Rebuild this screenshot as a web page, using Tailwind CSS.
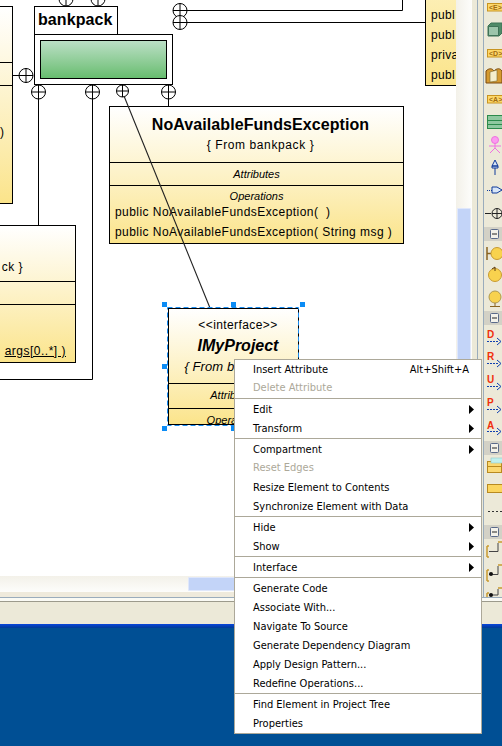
<!DOCTYPE html>
<html><head><meta charset="utf-8">
<script src="https://cdn.jsdelivr.net/npm/@tailwindcss/browser@4"></script>
</head>
<body class="m-0">
<div class="relative w-[502px] h-[746px] overflow-hidden flex flex-col bg-[#ece9d8] font-['Liberation_Sans',sans-serif] text-black">
  <!-- workspace -->
  <div class="flex h-[598px] shrink-0">
    <div class="w-[477px] shrink-0 flex flex-col">
      <div class="flex h-[576px] shrink-0">
        <div class="relative w-[456px] shrink-0 bg-white overflow-hidden">
          <!-- top-left class -->
          <div class="absolute left-[-60px] top-[6px] w-[73px] h-[198px] border border-black bg-linear-to-b from-white to-[#fbe48a] flex flex-col">
            <div class="h-[56px] border-b border-black"></div>
            <div class="h-[23px] border-b border-black"></div>
            <div class="pt-[40px] pl-[59px] text-[12px] leading-none">)</div>
          </div>
          <!-- lower-left class -->
          <div class="absolute left-[-60px] top-[225px] w-[136px] h-[138px] border border-black bg-linear-to-b from-white to-[#fbe48a] flex flex-col text-[12px]">
            <div class="h-[56px] border-b border-black relative"><span class="absolute right-[52px] top-[32px] tracking-[0.5px]">ck }</span></div>
            <div class="h-[23px] border-b border-black"></div>
            <div class="flex-1 relative"><span class="absolute right-[9px] bottom-[2px] underline tracking-[0.5px]">args[0..*] )</span></div>
          </div>
          <!-- top-right class -->
          <div class="absolute left-[425px] top-[-40px] w-[60px] h-[126px] border border-black bg-linear-to-b from-[#fdf3c4] to-[#fbe48a] text-[12px] pl-[5px] pt-[44px] flex flex-col">
            <span class="h-[20px] leading-[20px] tracking-[0.3px]">publ</span>
            <span class="h-[20px] leading-[20px] tracking-[0.3px]">publ</span>
            <span class="h-[20px] leading-[20px] tracking-[0.3px]">priva</span>
            <span class="h-[20px] leading-[20px] tracking-[0.3px]">publ</span>
          </div>
          <!-- bankpack -->
          <div class="absolute left-[34px] top-[6px] w-[84px] h-[29px] border border-black bg-white pl-[3px] text-[16px] leading-[25px] font-bold tracking-[0.1px]">bankpack</div>
          <div class="absolute left-[34px] top-[34px] w-[139px] h-[51px] border border-black bg-white p-[5px]">
            <div class="h-[39px] border border-black bg-linear-to-b from-[#bbdfc6] to-[#67bd6f]"></div>
          </div>
          <!-- NoAvailableFundsException -->
          <div class="absolute left-[109px] top-[106px] w-[295px] h-[138px] border border-black bg-linear-to-b from-white to-[#fbe48a] flex flex-col">
            <div class="h-[56px] border-b border-black flex flex-col items-center pt-[8px] pl-[8px]">
              <div class="text-[16px] leading-[20px] font-bold tracking-[0.08px]">NoAvailableFundsException</div>
              <div class="text-[12px] leading-[20px] tracking-[0.6px]">{ From bankpack }</div>
            </div>
            <div class="h-[23px] border-b border-black text-center text-[11px] italic leading-[22px]">Attributes</div>
            <div class="flex flex-col pt-[4px]">
              <div class="text-center text-[11px] italic leading-[12px]">Operations</div>
              <div class="pl-[5px] text-[12px] leading-[20px] tracking-[0.45px] whitespace-pre">public NoAvailableFundsException(  )</div>
              <div class="pl-[5px] text-[12px] leading-[20px] tracking-[0.45px] whitespace-pre">public NoAvailableFundsException( String msg )</div>
            </div>
          </div>
          <!-- IMyProject -->
          <div class="absolute left-[168px] top-[308px] w-[131px] h-[117px] border border-black bg-linear-to-b from-white to-[#fbe48a] flex flex-col overflow-hidden">
            <div class="h-[75px] shrink-0 border-b border-black flex flex-col items-center pt-[7px] pl-[9px]">
              <div class="text-[12px] leading-[18px] tracking-[0.4px]">&lt;&lt;interface&gt;&gt;</div>
              <div class="text-[16px] leading-[24px] font-bold italic">IMyProject</div>
              <div class="text-[13px] leading-[17px] italic whitespace-pre tracking-[0.1px]">{ From bankpack }</div>
            </div>
            <div class="h-[25px] shrink-0 border-b border-black text-center text-[11px] italic leading-[23px]">Attributes</div>
            <div class="text-center text-[11px] italic leading-[22px]">Operations</div>
          </div>
          <!-- connectors, drawn on top of the nodes -->
          <svg class="absolute left-0 top-0" width="456" height="576" fill="none" stroke="#000">
            <g stroke-width="1">
              <path d="M38.500 99V225M92.500 99V379.500H0M168.500 99V106M19 75.500H12M187 10.500H402.500V0M187 22.500H425"/>
              <g fill="#fff">
                <circle cx="66" cy="-1" r="7"/><circle cx="98" cy="-1" r="7"/>
                <circle cx="180" cy="10.500" r="7"/><circle cx="180" cy="22.500" r="7"/>
                <circle cx="26" cy="75.500" r="7"/><circle cx="38.500" cy="92" r="7"/>
                <circle cx="92.500" cy="92" r="7"/><circle cx="122.500" cy="91" r="6"/>
                <circle cx="168.500" cy="92" r="7"/>
              </g>
              <path d="M66 -8V6M59 -1H73M98 -8V6M91 -1H105M180 3V29M173 10.500H187M173 22.500H187M26 68V83M19 75.500H33M38.500 85V99M31.500 92H45.500M92.500 85V99M85.500 92H99.500M122.500 85V97M116.500 91H128.500M168.500 85V99M161.500 92H175.500"/>
            </g>
            <path d="M124 96L210 308" stroke="#222" stroke-width="1.100"/>
            <rect x="167.500" y="307.500" width="131" height="118" stroke="#1a8cf0" stroke-dasharray="5 3"/>
            <g fill="#0b8cf5" stroke="none">
              <rect x="162" y="302" width="5" height="5"/><rect x="231" y="302" width="5" height="5"/><rect x="300" y="302" width="5" height="5"/>
              <rect x="162" y="364" width="5" height="5"/><rect x="162" y="426" width="5" height="5"/><rect x="231" y="426" width="5" height="5"/>
            </g>
          </svg>
        </div>
        <!-- vertical scrollbar -->
        <div class="w-[16px] shrink-0 bg-linear-to-r from-[#f3f1e9] to-[#fdfdfb] pt-[208px] pl-px pr-px">
          <div class="h-[368px] bg-[#c3d4f8] border border-[#dfe7fb] rounded-[1px]"></div>
        </div>
        <div class="flex-1 bg-[#ece9d8]"></div>
      </div>
      <!-- horizontal scrollbar -->
      <div class="h-[16px] shrink-0 bg-linear-to-b from-[#f3f1e9] to-[#fdfdfb] pl-[188px] pt-px">
        <div class="w-[100px] h-[14px] bg-[#c3d4f8] border border-[#dfe7fb] rounded-[1px]"></div>
      </div>
      <div class="h-[6px] shrink-0 bg-[#efeadc] border-b border-[#9aacbc]"></div>
    </div>
    <!-- palette -->
    <div class="flex-1 flex min-w-0 border-l border-[#9aacbc]">
      <div class="w-[5px] shrink-0 border-b border-[#9aacbc]"></div>
      <div class="flex-1 min-w-0 border-l border-[#9aacbc] overflow-hidden">
        <svg width="18" height="598" class="block" font-family="Liberation Sans" font-weight="bold">
          <!-- tags -->
          <g><rect x="3.500" y="3.500" width="16" height="7.500" fill="#fdd86a" stroke="#c89420"/><text x="5" y="10" font-size="7" fill="#a06a10">&lt;E&gt;</text></g>
          <g><path d="M4 26l3-3h11v10l-3 3H4z" fill="#4f8a68" stroke="#3f7256"/><path d="M4.500 26.500h10v9h-10z" fill="#9cc4aa" stroke="#3f7256"/></g>
          <g><rect x="3.500" y="49.500" width="16" height="7.500" fill="#fdd86a" stroke="#c89420"/><text x="5" y="56" font-size="7" fill="#a06a10">&lt;D&gt;</text></g>
          <g><path d="M2 71c3-3 6-3 8 0 3-3 6-3 8 0v12h-16z" fill="#d59a30" stroke="#7a4a10"/><path d="M6 72l7-2v11l-7 1z" fill="#f4eecb" stroke="#7a6a30" stroke-width=".6"/></g>
          <g><rect x="3.500" y="95.500" width="16" height="7.500" fill="#fdd86a" stroke="#c89420"/><text x="5" y="102" font-size="7" fill="#a06a10">&lt;A&gt;</text></g>
          <g fill="#8fc8a0" stroke="#2c8a4c"><rect x="3.500" y="115.500" width="16" height="13"/><path d="M3.500 120.500h16M3.500 124.500h16"/></g>
          <g fill="#fb9bf0" stroke="#f070e0"><circle cx="11" cy="140" r="3.500"/><path d="M11 143v5M5 146h12M11 148l-5 5M11 148l5 5" fill="none"/></g>
          <g fill="#d8e6f8" stroke="#103a9a"><path d="M11 160l-3 6h6zM8 166h6v2H8z"/><path d="M11 168v7" fill="none"/></g>
          <g fill="none" stroke="#103a9a"><path d="M3 190.500h5" stroke-dasharray="1 1"/><path d="M8 187h5l5 3-5 3H8z" fill="#d8e6f8"/></g>
          <g fill="none" stroke="#222"><path d="M1 213.500h6"/><circle cx="13" cy="213.500" r="5"/><path d="M8 213.500h10M13 208.500v10"/></g>
          <!-- section -->
          <rect x="0" y="227" width="18" height="14" fill="#d3d1c6"/><rect x="6.500" y="229.500" width="8" height="9" fill="#f4f2ea" stroke="#5a6a8a" rx="1"/><path d="M8 234h5" stroke="#222"/>
          <g><path d="M3 247v13M3 253.500h4" stroke="#8a6420" stroke-width="1.500" fill="none"/><circle cx="13" cy="253.500" r="6" fill="#f8d24e" stroke="#c89a30"/></g>
          <g><circle cx="11" cy="275" r="6.500" fill="#f8d24e" stroke="#c89a30"/><path d="M8 269l3-2v4" stroke="#5a3a10" fill="none"/></g>
          <g><circle cx="11" cy="297" r="6" fill="#f8d24e" stroke="#b09a50"/><path d="M11 303v3M6 306.500h10" stroke="#8a6420" fill="none"/></g>
          <rect x="0" y="311" width="18" height="14" fill="#d3d1c6"/><rect x="6.500" y="313.500" width="8" height="9" fill="#f4f2ea" stroke="#5a6a8a" rx="1"/><path d="M8 318h5" stroke="#222"/>
          <g font-size="10" fill="#f0300c"><text x="3" y="338">D</text><text x="3" y="360">R</text><text x="3" y="383">U</text><text x="3" y="406">P</text><text x="3" y="429">A</text></g>
          <g fill="none" stroke="#1040b0"><path d="M3 341.500h12M3 363.500h12M3 386.500h12M3 409.500h12M3 431.500h12" stroke-dasharray="2 1"/><path d="M13 338l4 3.500-4 3.500M13 360l4 3.500-4 3.500M13 383l4 3.500-4 3.500M13 406l4 3.500-4 3.500M13 428l4 3.500-4 3.500"/></g>
          <rect x="0" y="441" width="18" height="14" fill="#d3d1c6"/><rect x="6.500" y="443.500" width="8" height="9" fill="#f4f2ea" stroke="#5a6a8a" rx="1"/><path d="M8 448h5" stroke="#222"/>
          <g><rect x="3.500" y="461.500" width="14" height="11" fill="#fbd870" stroke="#b88a20"/><path d="M3.500 466.500h14" stroke="#b88a20"/><rect x="7" y="458" width="12" height="5" fill="#bff0ee" stroke="#90c8c8" stroke-width=".6"/></g>
          <rect x="3.500" y="484.500" width="16" height="8" fill="#fbd55e" stroke="#b88a20"/>
          <path d="M4 511.500h14" stroke="#333" stroke-dasharray="2 2"/>
          <rect x="0" y="525" width="18" height="14" fill="#d3d1c6"/><rect x="6.500" y="527.500" width="8" height="9" fill="#f4f2ea" stroke="#5a6a8a" rx="1"/><path d="M8 532h5" stroke="#222"/>
          <g fill="none" stroke="#c89a30" stroke-width="1.500"><path d="M3 546v11M3 546h2M3 557h2M3 570v11M3 570h2M3 581h2M3 593v5M3 593h2"/><path d="M14 542h5M14 565h5M14 588h5"/></g>
          <g fill="none" stroke="#444"><path d="M5 551.500h9V543M5 574.500h9V566M5 595h9v-6"/></g>
          <circle cx="7" cy="574" r="2" fill="#111"/><circle cx="7" cy="595" r="2" fill="#111"/>
          <path d="M0 597.500h18" stroke="#9aacbc"/>
        </svg>
      </div>
    </div>
  </div>
  <div class="h-[4px] shrink-0 bg-[#fafaf4] border-b border-[#9c9a8c]"></div>
  <div class="h-[22px] shrink-0 bg-[#ece9d8]"></div>
  <div class="h-[4px] shrink-0 bg-linear-to-b from-[#0a46dc] to-[#003a96]"></div>
  <div class="flex-1 bg-[#004f94]"></div>
  <!-- context menu -->
  <div class="absolute left-[234px] top-[359px] w-[248px] bg-white border border-[#aca899] font-['DejaVu_Sans_Condensed','Liberation_Sans',sans-serif] text-[11px] leading-[19px]">
    <div class="flex flex-col">
      <div class="h-[19px] pl-[18px] pr-[12px] flex justify-between"><span>Insert Attribute</span><span>Alt+Shift+A</span></div>
      <div class="h-[19px] pl-[18px] text-[#aca899] -translate-y-px">Delete Attribute</div>
    </div>
    <div class="flex flex-col pt-px border-t border-[#aca899]">
      <div class="h-[19px] pl-[18px] pr-[7px] flex justify-between items-center"><span>Edit</span><svg width="5" height="9"><path d="M0 0l5 4.500L0 9z"/></svg></div>
      <div class="h-[19px] pl-[18px] pr-[7px] flex justify-between items-center"><span>Transform</span><svg width="5" height="9"><path d="M0 0l5 4.500L0 9z"/></svg></div>
    </div>
    <div class="flex flex-col pt-px border-t border-[#aca899]">
      <div class="h-[19px] pl-[18px] pr-[7px] flex justify-between items-center"><span>Compartment</span><svg width="5" height="9"><path d="M0 0l5 4.500L0 9z"/></svg></div>
      <div class="h-[19px] pl-[18px] text-[#aca899] -translate-y-px">Reset Edges</div>
      <div class="h-[19px] pl-[18px]">Resize Element to Contents</div>
      <div class="h-[19px] pl-[18px]">Synchronize Element with Data</div>
    </div>
    <div class="flex flex-col pt-px border-t border-[#aca899]">
      <div class="h-[19px] pl-[18px] pr-[7px] flex justify-between items-center"><span>Hide</span><svg width="5" height="9"><path d="M0 0l5 4.500L0 9z"/></svg></div>
      <div class="h-[19px] pl-[18px] pr-[7px] flex justify-between items-center"><span>Show</span><svg width="5" height="9"><path d="M0 0l5 4.500L0 9z"/></svg></div>
    </div>
    <div class="flex flex-col pt-px border-t border-[#aca899]">
      <div class="h-[19px] pl-[18px] pr-[7px] flex justify-between items-center"><span>Interface</span><svg width="5" height="9"><path d="M0 0l5 4.500L0 9z"/></svg></div>
    </div>
    <div class="flex flex-col pt-px border-t border-[#aca899]">
      <div class="h-[19px] pl-[18px]">Generate Code</div>
      <div class="h-[19px] pl-[18px]">Associate With...</div>
      <div class="h-[19px] pl-[18px]">Navigate To Source</div>
      <div class="h-[19px] pl-[18px]">Generate Dependency Diagram</div>
      <div class="h-[19px] pl-[18px]">Apply Design Pattern...</div>
      <div class="h-[19px] pl-[18px]">Redefine Operations...</div>
    </div>
    <div class="flex flex-col pt-px border-t border-[#aca899]">
      <div class="h-[19px] pl-[18px]">Find Element in Project Tree</div>
      <div class="h-[19px] pl-[18px]">Properties</div>
    </div>
  </div>
</div>
</body></html>
